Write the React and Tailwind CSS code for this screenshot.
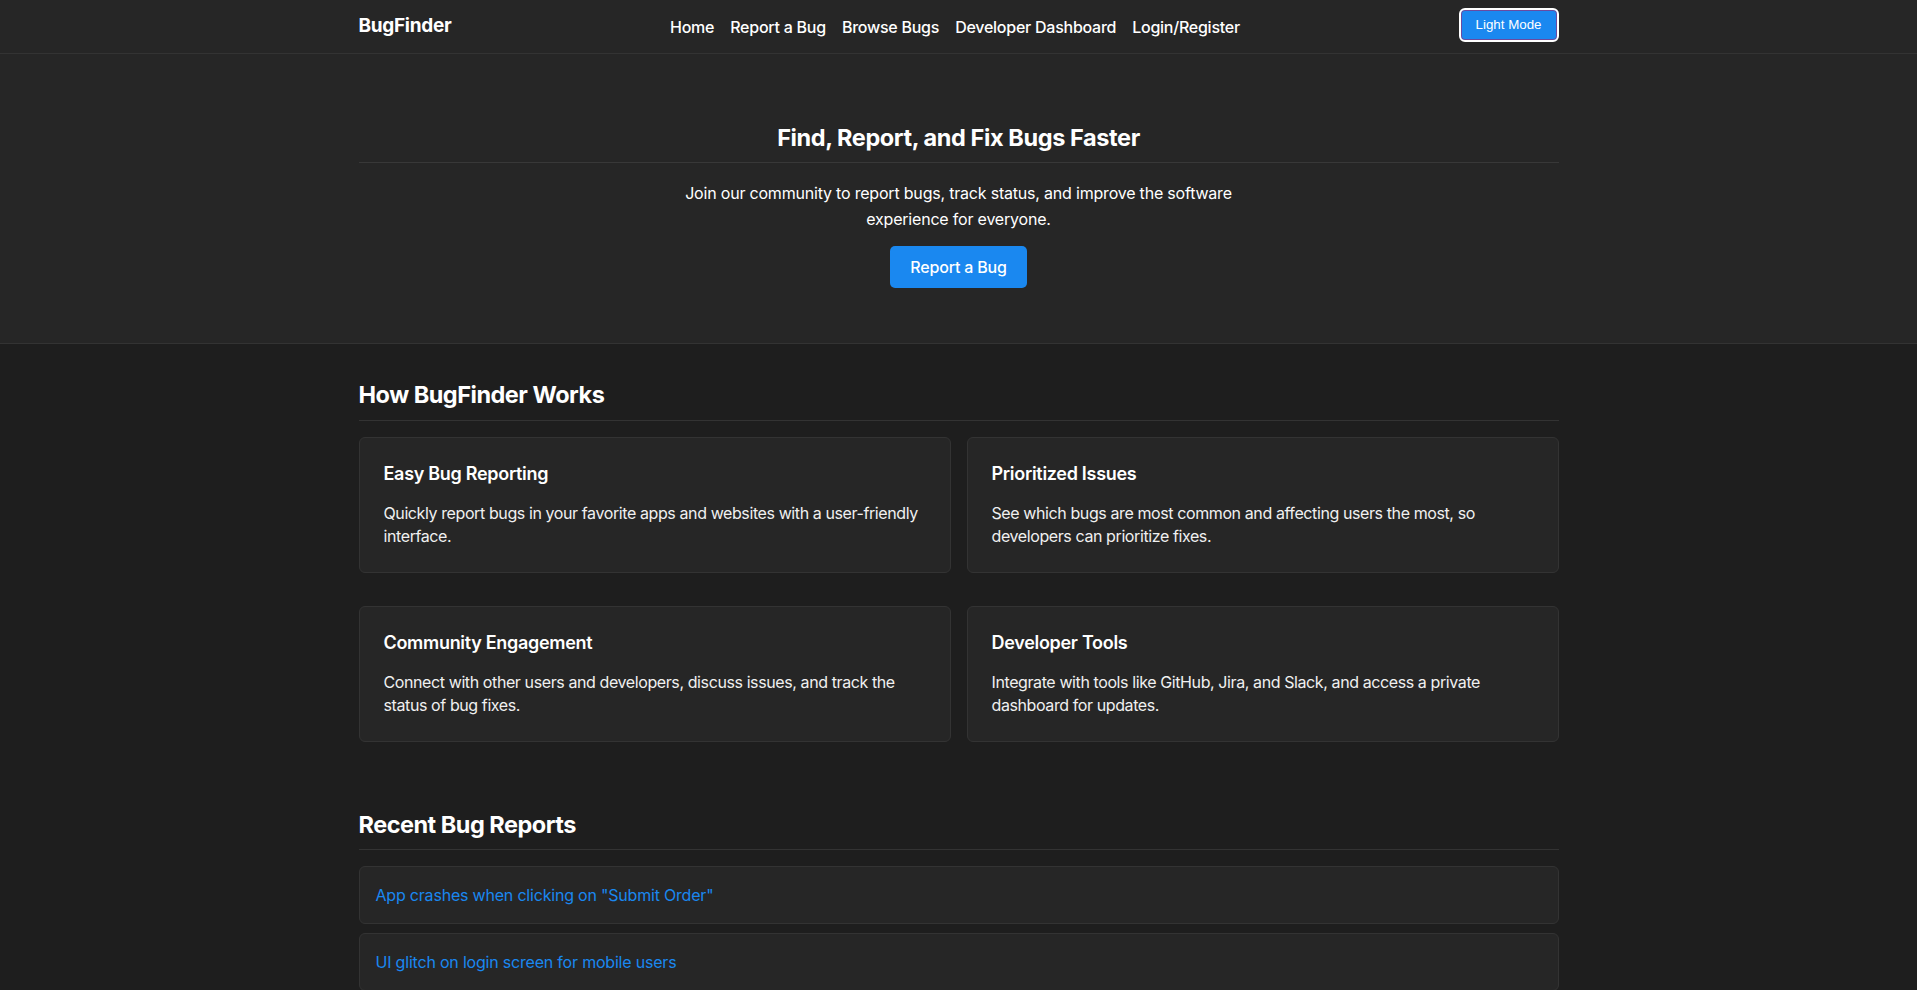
export default function App() {
  const features = [
    { t: "Easy Bug Reporting", l1: "Quickly report bugs in your favorite apps and websites with a user-friendly", l2: "interface." },
    { t: "Prioritized Issues", l1: "See which bugs are most common and affecting users the most, so", l2: "developers can prioritize fixes." },
    { t: "Community Engagement", l1: "Connect with other users and developers, discuss issues, and track the", l2: "status of bug fixes." },
    { t: "Developer Tools", l1: "Integrate with tools like GitHub, Jira, and Slack, and access a private", l2: "dashboard for updates." },
  ];
  const bugs = [
    'App crashes when clicking on "Submit Order"',
    "UI glitch on login screen for mobile users",
  ];
  return (
    <div className="min-h-screen bg-[#1e1e1e] text-[#f0f0f0] font-['Inter','Noto_Sans',sans-serif]">
      <header className="bg-[#262626] border-b border-[#333333]">
        <div className="max-w-[1200px] mx-auto h-[53px] flex items-center justify-between">
          <div className="text-[19px] font-bold tracking-[-0.3px] text-white">BugFinder</div>
          <nav className="flex items-center gap-[16px] text-[16px] font-medium tracking-[-0.25px] text-white">
            <a>Home</a>
            <a>Report a Bug</a>
            <a>Browse Bugs</a>
            <a>Developer Dashboard</a>
            <a>Login/Register</a>
          </nav>
          <button className="mb-[3px] h-[34px] px-[15px] rounded-[6px] border-2 border-white bg-[#1a88f0] text-white text-[13.33px] font-['Liberation_Sans',Arial,sans-serif] shadow-[inset_0_0_0_1px_#6b4aa0]">
            Light Mode
          </button>
        </div>
      </header>

      <section className="bg-[#262626] border-b border-[#333333]">
        <div className="max-w-[1200px] mx-auto pt-[70px] pb-[55px] flex flex-col items-center">
          <h1 className="w-full text-center text-[23.5px] font-bold leading-[1.2] tracking-[-0.4px] text-white pb-[10px] border-b border-[#383838]">
            Find, Report, and Fix Bugs Faster
          </h1>
          <p className="mt-[18px] max-w-[600px] text-center text-[16px] leading-[1.6] tracking-[-0.2px] text-white">
            Join our community to report bugs, track status, and improve the software experience for everyone.
          </p>
          <button className="mt-[14px] h-[42px] px-[20px] rounded-[5px] bg-[#1a88f0] text-white text-[16px] font-medium tracking-[-0.2px]">
            Report a Bug
          </button>
        </div>
      </section>

      <main className="max-w-[1200px] mx-auto">
        <section className="pt-[37px]">
          <h2 className="text-[23.5px] font-bold leading-[1.2] tracking-[-0.5px] text-white pb-[10px] border-b border-[#333333]">
            How BugFinder Works
          </h2>
          <div className="mt-[16px] grid grid-cols-2 gap-x-[16px] gap-y-[33px]">
            {features.map((f) => (
              <div key={f.t} className="bg-[#262626] border border-[#333333] rounded-[6px] px-[24px] pt-[25px] pb-[22px] h-[136px]">
                <h3 className="text-[18px] font-semibold leading-[1.2] tracking-[-0.3px] text-white">{f.t}</h3>
                <p className="mt-[18px] text-[16px] leading-[23px] tracking-[-0.4px] text-[#f0f0f0] whitespace-nowrap">
                  {f.l1}
                  <br />
                  {f.l2}
                </p>
              </div>
            ))}
          </div>
        </section>

        <section className="pt-[69px] pb-[40px]">
          <h2 className="text-[23.5px] font-bold leading-[1.2] tracking-[-0.5px] text-white pb-[10px] border-b border-[#333333]">
            Recent Bug Reports
          </h2>
          <div className="mt-[16px] flex flex-col gap-[9px]">
            {bugs.map((b) => (
              <div key={b} className="bg-[#262626] border border-[#333333] rounded-[6px] px-[16px] py-[16px]">
                <a className="text-[16px] leading-[23px] tracking-[-0.2px] text-[#1a88f0]">{b}</a>
              </div>
            ))}
          </div>
        </section>
      </main>
    </div>
  );
}
